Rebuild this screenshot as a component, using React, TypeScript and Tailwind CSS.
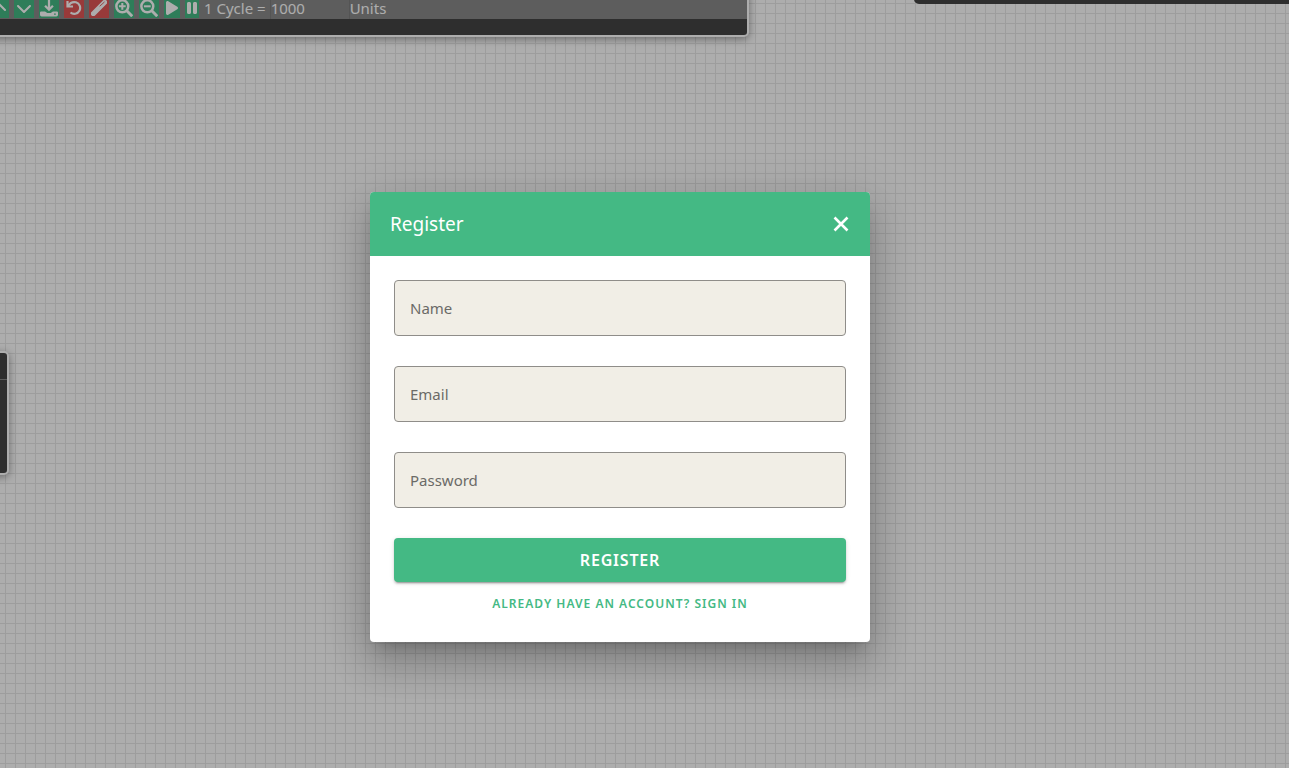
import { useState } from "react";
import type { ReactNode } from "react";
import { FaChevronUp, FaChevronDown, FaPlay, FaPause } from "react-icons/fa6";

function DownloadIcon() {
  return (
    <svg viewBox="0 0 16 16" className="size-[18px]" fill="none" stroke="currentColor">
      <path d="M8 0v9M4.500 6 8 9.500 11.500 6" strokeWidth="2" />
      <path
        fillRule="evenodd"
        stroke="none"
        fill="currentColor"
        d="M1 11h3.500l2 1.500h3l2-1.500H15a1 1 0 0 1 1 1v2a1.500 1.500 0 0 1-1.500 1.500h-13A1.500 1.500 0 0 1 0 14v-2a1 1 0 0 1 1-1Zm11.500 1.800v1.200h1.500v-1.200Z"
      />
    </svg>
  );
}

function UndoIcon() {
  return (
    <svg viewBox="0 0 16 16" className="size-4" fill="none" stroke="currentColor" strokeWidth="2.200">
      <path d="M1.500 1v5.500H7" />
      <path d="M2 6C4 3 7 1.500 10 2.300a5.900 5.900 0 1 1-5.500 10.200" />
    </svg>
  );
}

function MarkerIcon() {
  return (
    <svg viewBox="0 0 16 16" className="size-4" fill="none" stroke="currentColor" strokeLinecap="round">
      <path d="M2.300 13.700 13.700 2.300" strokeWidth="5" />
      <path d="M9 6 13.200 2.200" stroke="#e05656" strokeWidth="0.900" />
    </svg>
  );
}

function ZoomIcon({ plus }: { plus?: boolean }) {
  return (
    <svg viewBox="0 0 16 16" className="size-[18px]" fill="none" stroke="currentColor" strokeWidth="2.200">
      <circle cx="6.500" cy="6.500" r="5.300" />
      <path d="M10.500 10.500 15.300 15.300" strokeWidth="2.600" />
      <path d={plus ? "M3.500 6.500h6M6.500 3.500v6" : "M3.500 6.500h6"} strokeWidth="1.800" />
    </svg>
  );
}

const green = "bg-[#44b984]";
const red = "bg-[#e05656]";

const tools: { label: string; tone: string; width: string; icon: ReactNode }[] = [
  { label: "Move up", tone: green, width: "w-5", icon: <FaChevronUp className="size-4" /> },
  { label: "Move down", tone: green, width: "w-5", icon: <FaChevronDown className="size-4" /> },
  { label: "Download", tone: green, width: "w-5", icon: <DownloadIcon /> },
  { label: "Undo", tone: red, width: "w-5", icon: <UndoIcon /> },
  { label: "Erase", tone: red, width: "w-5", icon: <MarkerIcon /> },
  { label: "Zoom in", tone: green, width: "w-5", icon: <ZoomIcon plus /> },
  { label: "Zoom out", tone: green, width: "w-5", icon: <ZoomIcon /> },
  { label: "Play", tone: green, width: "w-4", icon: <FaPlay className="size-4" /> },
  { label: "Pause", tone: green, width: "w-[14px]", icon: <FaPause className="size-4" /> },
];

function Toolbar() {
  return (
    <section
      aria-label="Playback"
      className="absolute -top-3 -left-5 w-[769px] rounded-[5px] border-2 border-white bg-[#454545] pb-4 shadow-[0_2px_8px_rgba(0,0,0,0.4)]"
    >
      <div className="flex h-[29px] items-end gap-[5px] bg-[#8a8a8a] pl-[7px]">
        {tools.map((tool) => (
          <button
            key={tool.label}
            type="button"
            aria-label={tool.label}
            className={`mb-px flex h-5 shrink-0 items-center justify-center text-white ${tool.width} ${tool.tone}`}
          >
            {tool.icon}
          </button>
        ))}
        <div className="flex text-[15px] leading-[22px] text-white">
          <label htmlFor="cycle" className="mr-1 whitespace-nowrap">
            1 Cycle =
          </label>
          <input
            id="cycle"
            defaultValue="1000"
            className="h-[22px] w-20 border-x border-[#7c7c7c] bg-transparent outline-none"
          />
          <span>Units</span>
        </div>
      </div>
    </section>
  );
}

function Field({ id, label, type }: { id: string; label: string; type: string }) {
  return (
    <div className="grid items-center">
      <input
        id={id}
        type={type}
        placeholder=" "
        className="peer col-start-1 row-start-1 h-14 w-full rounded border border-[#8f8d89] bg-[#f1eee6] px-[15px] text-[15px] text-[#333] outline-none focus:border-[#44b984]"
      />
      <label
        htmlFor={id}
        className="pointer-events-none invisible col-start-1 row-start-1 justify-self-start px-4 text-[15px] leading-6 text-[#6b6a67] peer-placeholder-shown:visible"
      >
        {label}
      </label>
    </div>
  );
}

function RegisterDialog({ onClose }: { onClose: () => void }) {
  return (
    <div
      role="dialog"
      aria-modal="true"
      aria-labelledby="register-title"
      className="w-full max-w-[500px] overflow-hidden rounded bg-white shadow-[0_11px_15px_-7px_rgba(0,0,0,0.2),0_24px_38px_3px_rgba(0,0,0,0.14),0_9px_46px_8px_rgba(0,0,0,0.12)]"
    >
      <header className="flex h-16 items-center justify-between bg-[#44b984] px-5 text-white">
        <h1 id="register-title" className="text-[19px] leading-8">
          Register
        </h1>
        <button type="button" aria-label="Close" onClick={onClose}>
          <svg viewBox="0 0 18 18" className="size-[18px]" fill="none" stroke="currentColor" strokeWidth="2.600">
            <path d="m2.500 2.500 13 13M15.500 2.500l-13 13" />
          </svg>
        </button>
      </header>
      <form className="flex flex-col gap-[30px] p-6" onSubmit={(event) => event.preventDefault()}>
        <Field id="name" label="Name" type="text" />
        <Field id="email" label="Email" type="email" />
        <Field id="password" label="Password" type="password" />
        <div className="flex flex-col items-center gap-2">
          <button
            type="submit"
            className="h-11 w-full rounded bg-[#44b984] text-base font-semibold tracking-wider text-white shadow-[0_3px_1px_-2px_rgba(0,0,0,0.2),0_2px_2px_0_rgba(0,0,0,0.14),0_1px_5px_0_rgba(0,0,0,0.12)]"
          >
            REGISTER
          </button>
          <button type="button" className="h-7 text-xs font-semibold tracking-[1px] text-[#44b984]">
            ALREADY HAVE AN ACCOUNT? SIGN IN
          </button>
        </div>
      </form>
    </div>
  );
}

export default function App() {
  const [open, setOpen] = useState(true);
  return (
    <main className="relative min-h-screen overflow-hidden bg-white bg-[linear-gradient(to_right,#e8e8e8_1px,transparent_1px),linear-gradient(to_bottom,#e8e8e8_1px,transparent_1px)] bg-[size:10px_10px] bg-[position:5px_3px] font-['Noto_Sans',sans-serif]">
      <Toolbar />
      <aside className="absolute top-[351px] -left-10 h-[124px] w-[49px] rounded-[5px] border-2 border-white bg-[#454545] pt-[26px] shadow-[0_2px_8px_rgba(0,0,0,0.4)]">
        <hr className="border-[#8a8a8a]" />
      </aside>
      <aside className="absolute -top-4 -right-4 left-[914px] h-5 rounded-[5px] bg-[#454545]" />
      {open && (
        <div className="absolute inset-0 flex items-center justify-center bg-black/32 pt-[66px] pr-[49px]">
          <RegisterDialog onClose={() => setOpen(false)} />
        </div>
      )}
    </main>
  );
}
